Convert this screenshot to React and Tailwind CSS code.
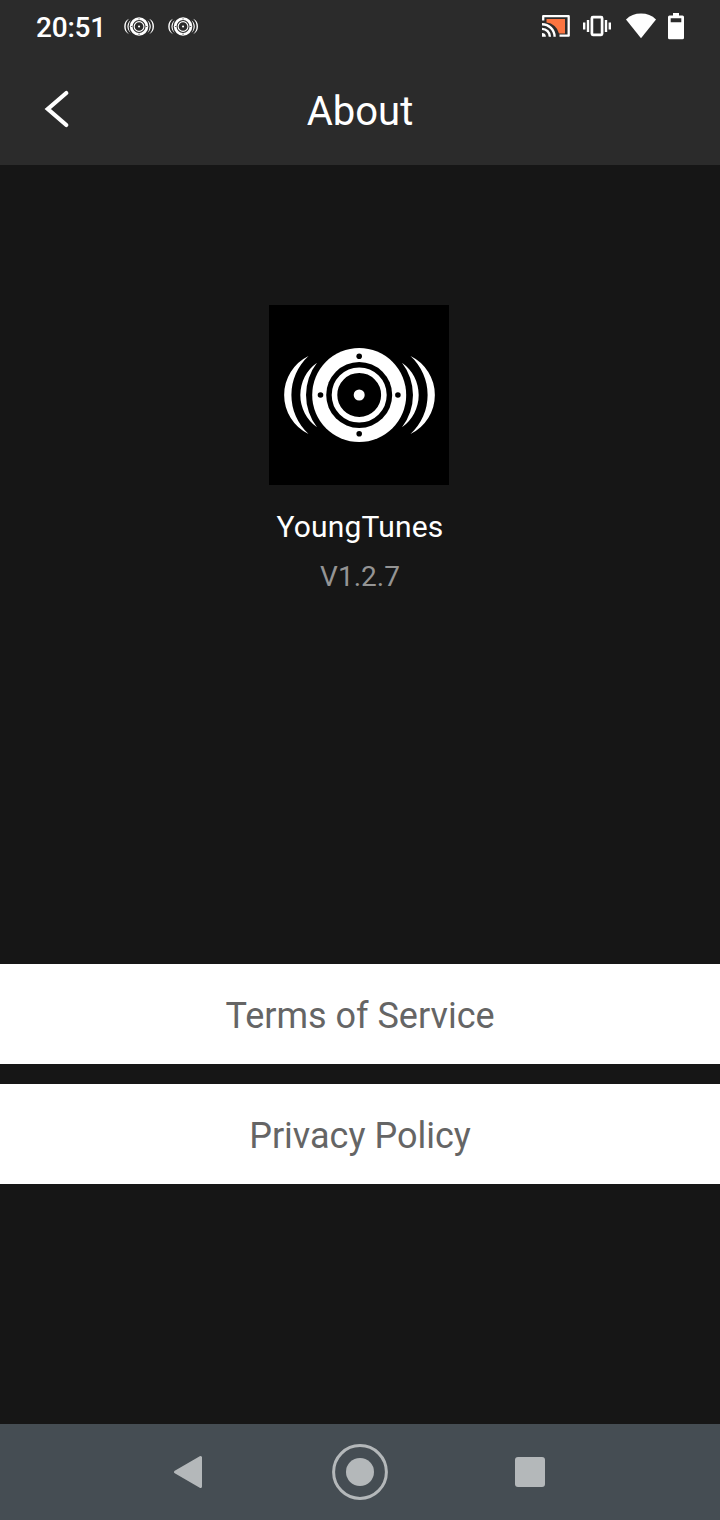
const SpeakerMark = ({ viewBox, hole = '#000', className = '' }) => {
  return (
    <svg viewBox={viewBox} className={className} fill="#fff">
      <path d="M39.5 51A43.4 43.4 0 0 0 39.5 129A53 53 0 0 1 39.5 51Z" />
      <path d="M48 57.7A39.6 39.6 0 0 0 48 122.3A53 53 0 0 1 48 57.7Z" />
      <path d="M141.5 51A43.4 43.4 0 0 1 141.5 129A53 53 0 0 0 141.5 51Z" />
      <path d="M133 57.7A39.6 39.6 0 0 1 133 122.3A53 53 0 0 0 133 57.7Z" />
      <circle cx="90.2" cy="90" r="47" />
      <circle cx="90.2" cy="90" r="33" fill={hole} />
      <circle cx="90.2" cy="90" r="24.7" fill="none" stroke="#fff" strokeWidth="5.6" />
      <circle cx="90.2" cy="90" r="5.5" />
      <g fill={hole}>
        <circle cx="90.2" cy="51.3" r="2.8" />
        <circle cx="90.2" cy="128.7" r="2.8" />
        <circle cx="51.5" cy="90" r="2.8" />
        <circle cx="128.9" cy="90" r="2.8" />
      </g>
    </svg>
  );
};

const CastIcon = () => (
  <svg viewBox="0 0 28 24" className="h-6 w-7" fill="none">
    <path d="M4.5 5H23V19.5H17A14 14 0 0 0 4.5 8.5Z" fill="#fb7440" />
    <path d="M1.2 6.5V2.2H26.7V21.7H17.5" stroke="#fff" strokeWidth="2.3" strokeLinejoin="round" />
    <path d="M0 10.2A12.6 12.6 0 0 1 12.6 22.8M0 14.9A7.9 7.9 0 0 1 7.9 22.8" stroke="#fff" strokeWidth="2.4" />
    <path d="M0 18.9A3.9 3.9 0 0 1 3.9 22.8H0Z" fill="#fff" />
  </svg>
);

const VibrateIcon = () => (
  <svg viewBox="0 0 28 24" className="h-6 w-7" fill="none" stroke="#fff" strokeWidth="2.4">
    <rect x="8.9" y="3.2" width="10.2" height="17.6" rx="1" strokeWidth="2.7" />
    <path d="M5 6V18M23 6V18M1.2 8.5V15.5M26.8 8.5V15.5" />
  </svg>
);

const WifiIcon = () => (
  <svg viewBox="0 0 30 26" className="h-[26px] w-[30px]" fill="#fff">
    <path d="M15 25.2L0 6.4C4 2.5 9 .5 15 .5S26 2.5 30 6.4Z" />
  </svg>
);

const BatteryIcon = () => (
  <svg viewBox="0 0 16 28" className="h-7 w-4" fill="#fff">
    <path fillRule="evenodd" d="M5 1.1H11V3.4H14.5Q16 3.4 16 4.9V25.8Q16 27.3 14.5 27.3H1.5Q0 27.3 0 25.8V4.9Q0 3.4 1.5 3.4H5ZM2.7 6.3V10.2H13.3V6.3Z" />
  </svg>
);

const StatusBar = () => {
  return (
    <div className="flex h-[55px] items-start justify-between px-9 text-white">
      <div className="flex h-[53px] items-center">
        <span className="w-[88px] whitespace-nowrap pt-[3px] text-[28px] font-medium leading-none tracking-[-0.2px]">20:51</span>
        <SpeakerMark viewBox="14 42 152 96" hole="#2b2b2b" className="mr-3.5 h-[19px] w-[30px]" />
        <SpeakerMark viewBox="14 42 152 96" hole="#2b2b2b" className="h-[19px] w-[30px]" />
      </div>
      <div className="flex h-[52px] items-center">
        <div className="mr-[13px]"><CastIcon /></div>
        <div className="mr-[15px]"><VibrateIcon /></div>
        <div className="mr-3"><WifiIcon /></div>
        <BatteryIcon />
      </div>
    </div>
  );
};

const Header = () => {
  return (
    <header className="grid h-[110px] grid-cols-[120px_1fr_120px] items-start">
      <button className="flex h-[108px] items-center pl-11" aria-label="Back">
        <svg viewBox="0 0 26 40" className="h-10 w-[26px]" fill="none" stroke="#fff" strokeWidth="4.2" strokeLinecap="round" strokeLinejoin="miter">
          <path d="M22.3 4L3.8 20L22.3 36" />
        </svg>
      </button>
      <h1 className="text-center text-[40px] leading-[114px] text-white">About</h1>
    </header>
  );
};

const LinkRow = ({ children }) => {
  return (
    <button className="h-[100px] w-full bg-white pt-1 text-center text-4xl leading-[96px] text-[#656565]">
      {children}
    </button>
  );
};

const NavBar = () => {
  return (
    <nav className="grid h-24 grid-cols-[1fr_56px_1fr] items-center bg-[#454d53]">
      <svg viewBox="0 0 30 34" className="ml-[173px] h-[34px] w-[30px]" fill="#b4b8ba" stroke="#b4b8ba" strokeWidth="3" strokeLinejoin="round">
        <path d="M27.5 2.5V31.5L2.5 17Z" />
      </svg>
      <svg viewBox="0 0 56 56" className="h-14 w-14">
        <circle cx="28" cy="28" r="26.4" fill="none" stroke="#b4b8ba" strokeWidth="3" />
        <circle cx="28" cy="28" r="14" fill="#b4b8ba" />
      </svg>
      <div className="ml-[127px] h-[30px] w-[30px] rounded-[3px] bg-[#b4b8ba]" />
    </nav>
  );
};

export default function App() {
  return (
    <div className="flex h-[1520px] w-[720px] flex-col overflow-hidden bg-[#161616] font-['Roboto',sans-serif]">
      <div className="bg-[#2b2b2b]">
        <StatusBar />
        <Header />
      </div>

      <main className="flex flex-1 flex-col">
        <section className="flex h-[799px] flex-col items-center pt-[140px]">
          <div className="mr-0.5 h-[180px] w-[180px] bg-black">
            <SpeakerMark viewBox="0 0 180 180" className="h-full w-full" />
          </div>
          <h2 className="mt-5 text-[30px] leading-[44px] tracking-[0.2px] text-white">YoungTunes</h2>
          <p className="mt-1.5 text-[28px] leading-[44px] text-[#949494]">V1.2.7</p>
        </section>

        <div className="flex flex-col gap-5">
          <LinkRow>Terms of Service</LinkRow>
          <LinkRow>Privacy Policy</LinkRow>
        </div>
      </main>

      <NavBar />
    </div>
  );
}
